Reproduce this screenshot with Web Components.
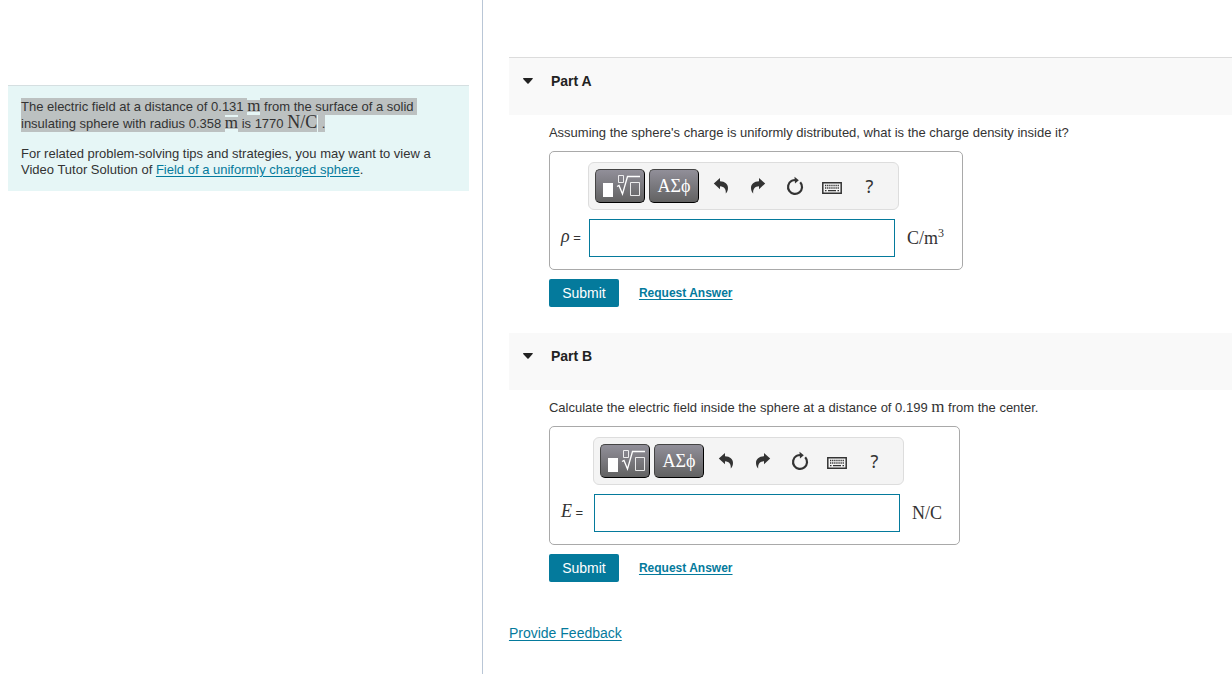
<!DOCTYPE html>
<html lang="en">
<head>
<meta charset="utf-8">
<title>Electric field of a charged sphere</title>
<style>
  html, body { margin: 0; background: #fff; }
  body { font: 13px/16px "Liberation Sans", Arial, sans-serif; color: #333; }
</style>
</head>
<body>
<problem-page>
  <problem-intro slot="intro"></problem-intro>
  <problem-part label="Part A" divided>
    <span slot="question">Assuming the sphere's charge is uniformly distributed, what is the charge density inside it?</span>
    <answer-box symbol="ρ" power="3" unit="C/m" style="--label: 27px; --unit: 54px"></answer-box>
  </problem-part>
  <problem-part label="Part B">
    <span slot="question">Calculate the electric field inside the sphere at a distance of 0.199 <math-unit>m</math-unit> from the center.</span>
    <answer-box symbol="E" unit="N/C" style="--label: 32px; --unit: 46px"></answer-box>
  </problem-part>
</problem-page>

<template id="t-page">
  <style>
    :host { display: flex; min-height: 100vh; }
    aside { flex: 0 0 39.2%; box-sizing: border-box; border-right: 1px solid #b9c6d6; padding: 85px 13px 24px 8px; }
    main { flex: 1; min-width: 0; padding: 57px 0 24px 26px; }
    footer { padding-top: 16px; font-size: 14px; line-height: 18px; }
    a { color: #047a9c; text-underline-offset: 2px; }
  </style>
  <aside><slot name="intro"></slot></aside>
  <main><slot></slot><footer><a href="#feedback">Provide Feedback</a></footer></main>
</template>

<template id="t-intro">
  <style>
    :host { display: block; background: #e6f6f6; border-top: 1px solid #d5dfe1; padding: 13px; }
    p { margin: 0; }
    p + p { margin-top: 14px; }
    .given { line-height: 17px; margin-top: -1px; }
    .sel { background: #bcc1c1; padding: 1px 0; }
    math-unit.sel { padding: 0; background: linear-gradient(#bcc1c1, #bcc1c1) center / 100% 12px no-repeat; }
    math-unit.wide { font-size: 18px; background: #bcc1c1; margin-right: 1px; }
    a { color: #047a9c; text-underline-offset: 2px; }
  </style>
  <p class="given"><span class="sel">The electric field at a distance of 0.131 </span><math-unit class="sel">m</math-unit><span class="sel"> from the surface of a solid&nbsp;</span><br><span class="sel">insulating sphere with radius 0.358 </span><math-unit class="sel">m</math-unit><span class="sel"> is 1770 </span><math-unit class="sel wide">N/C</math-unit><span class="sel">&nbsp;.</span></p>
  <p>For related problem-solving tips and strategies, you may want to view a<br>Video Tutor Solution of <a href="#video">Field of a uniformly charged sphere</a>.</p>
</template>

<template id="t-unit"><style>:host { display: inline; font: 17px/0 "Liberation Serif", serif; }</style><slot></slot></template>

<template id="t-part">
  <style>
    :host { display: block; margin-bottom: 26px; }
    h2 { margin: 0; background: #f9f9f9; padding: 14px 14px 25px; font: bold 14px/18px "Liberation Sans", Arial, sans-serif; }
    :host([divided]) h2 { border-top: 1px solid #dcdcdc; }
    h2 button { display: flex; align-items: center; gap: 18px; border: 0; padding: 0; background: none; font: inherit; color: #222; cursor: pointer; }
    .body { padding: 10px 16px 0 40px; }
    p { margin: 0 0 10px; }
    .actions { display: flex; align-items: center; gap: 20px; margin-top: 9px; }
    .submit { width: 70px; height: 28px; padding: 0; border: 0; border-radius: 2px; background: #047a9c; color: #fff; font: 14px/18px "Liberation Sans", Arial, sans-serif; cursor: pointer; }
    a { color: #047a9c; font-size: 12px; font-weight: bold; text-underline-offset: 2px; }
  </style>
  <h2><button type="button" aria-expanded="true"><svg width="10" height="6" viewBox="0 0 10 6" aria-hidden="true"><path d="M0 0.5Q0 0 .8 0H9.2Q10 0 9.8.7L5.6 5.4Q5 6 4.4 5.4L.2.9Z" fill="#222"/></svg><span></span></button></h2>
  <div class="body">
    <p><slot name="question"></slot></p>
    <slot></slot>
    <div class="actions"><button type="button" class="submit">Submit</button><a href="#answer">Request Answer</a></div>
  </div>
</template>

<template id="t-answer">
  <style>
    :host { display: block; }
    .box { box-sizing: border-box; width: fit-content; display: grid; grid-template-columns: var(--label) auto var(--unit); gap: 9px 0; align-items: center; border: 1px solid #a9a9a9; border-radius: 5px; padding: 10px 9px 12px 11px; }
    equation-toolbar { grid-column: 2; }
    label { grid-column: 1; white-space: nowrap; line-height: 16px; }
    i { font: italic 18px/0 "Liberation Serif", serif; }
    input { box-sizing: border-box; width: 306px; height: 38px; margin: 0 0 0 1px; border: 1px solid #047a9c; padding: 4px 8px; background: #fff; font: 16px/20px "Liberation Serif", serif; outline: 0; }
    .unit { padding-left: 8px; font: 18px/20px "Liberation Serif", serif; white-space: nowrap; }
    sup { font-size: 12px; line-height: 0; }
  </style>
  <div class="box">
    <equation-toolbar></equation-toolbar>
    <label for="answer"><i></i> =</label>
    <input id="answer" type="text" autocomplete="off">
    <div class="unit"><span></span><sup></sup></div>
  </div>
</template>

<template id="t-toolbar">
  <style>
    :host { box-sizing: border-box; width: 311px; height: 48px; display: flex; align-items: center; border: 1px solid #ddd; border-radius: 6px; background: #f4f4f4; padding: 0 6px; }
    button { padding: 0; font: inherit; cursor: pointer; display: flex; align-items: center; justify-content: center; }
    .menu { box-sizing: border-box; width: 50px; height: 34px; margin-right: 4px; border: 1px solid #000; border-top-color: #444; border-left-color: #444; border-radius: 5px; background: linear-gradient(#918f99, #626262); color: #fff; font: 18px/20px "Liberation Serif", serif; }
    .tool { width: 37px; height: 34px; border: 0; background: none; color: #333; }
    .help { font: 18px/20px "Noto Sans", sans-serif; }
  </style>
  <button type="button" class="menu" aria-label="Templates"><svg width="40" height="24" viewBox="0 0 40 24" fill="none" stroke="#fff"><path d="M3 9h10v14H3z" fill="#fff" stroke="none"/><path d="M18.5 1.500h5v7h-5zM30.500 8.500h9v13h-9z" stroke-opacity=".85"/><path d="M17 12.500l2-1 3.500 8.500 5-17.500H40" stroke-width="1.300"/></svg></button>
  <button type="button" class="menu" aria-label="Symbols">ΑΣϕ</button>
  <button type="button" class="tool" aria-label="Undo"><svg width="16" height="16" viewBox="0 0 16 16"><path d="M.8 5.500L7 0V3.200C12 3.300 15 6 15 10 15 12.500 14 14.200 12.800 15.500 13.200 11.500 11.500 8.500 7 8.300V11.200Z" fill="currentColor"/></svg></button>
  <button type="button" class="tool" aria-label="Redo"><svg width="16" height="16" viewBox="0 0 16 16"><path d="M15.200 5.500L9 0V3.200C4 3.300 1 6 1 10 1 12.500 2 14.200 3.200 15.500 2.800 11.500 4.500 8.500 9 8.300V11.200Z" fill="currentColor"/></svg></button>
  <button type="button" class="tool" aria-label="Reset"><svg width="18" height="20" viewBox="0 0 18 20"><path d="M14.200 6.200A7 7 0 1 1 5.500 4.900Q7 4 10 4" fill="none" stroke="currentColor" stroke-width="2.200"/><path d="M8.500 .8L12.800 4.200 9 7.500Z" fill="currentColor"/></svg></button>
  <button type="button" class="tool" aria-label="Keyboard shortcuts"><svg width="20" height="16" viewBox="0 0 20 16"><path d="M.8 4.800H19.200V15.200H.8Z" fill="none" stroke="currentColor" stroke-width="1.500"/><path d="M3 7.500H17M3 10H17" stroke="currentColor" stroke-width="1.300" stroke-dasharray="1.300 .8"/><path d="M3 12.700H4.500M6 12.700H14M15.500 12.700H17" stroke="currentColor" stroke-width="1.300"/></svg></button>
  <button type="button" class="tool help" aria-label="Help">?</button>
</template>

<script>
  class Base extends HTMLElement {
    constructor() {
      super();
      this.attachShadow({ mode: "open" }).append(
        document.getElementById(this.constructor.template).content.cloneNode(true));
    }
    fill(selector, attribute) {
      this.shadowRoot.querySelector(selector).textContent = this.getAttribute(attribute) || "";
    }
  }
  customElements.define("math-unit", class extends Base { static template = "t-unit"; });
  customElements.define("equation-toolbar", class extends Base { static template = "t-toolbar"; });
  customElements.define("answer-box", class extends Base {
    static template = "t-answer";
    connectedCallback() {
      this.fill("i", "symbol");
      this.fill(".unit span", "unit");
      this.fill("sup", "power");
    }
  });
  customElements.define("problem-part", class extends Base {
    static template = "t-part";
    connectedCallback() { this.fill("h2 span", "label"); }
  });
  customElements.define("problem-intro", class extends Base { static template = "t-intro"; });
  customElements.define("problem-page", class extends Base { static template = "t-page"; });
</script>
</body>
</html>
